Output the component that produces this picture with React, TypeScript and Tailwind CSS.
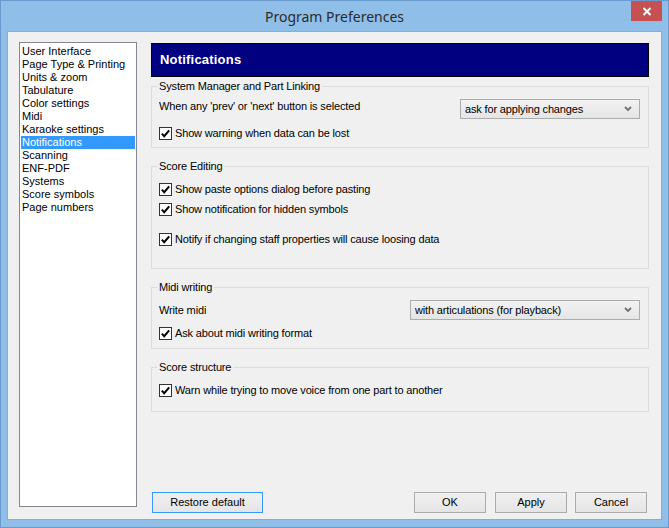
const categories = [
  "User Interface",
  "Page Type & Printing",
  "Units & zoom",
  "Tabulature",
  "Color settings",
  "Midi",
  "Karaoke settings",
  "Notifications",
  "Scanning",
  "ENF-PDF",
  "Systems",
  "Score symbols",
  "Page numbers",
];

function CheckRow({ label, className = "" }: { label: string; className?: string }) {
  return (
    <div className={`flex items-center h-[13px] ${className}`}>
      <span className="w-[13px] h-[13px] border border-[#333333] bg-white flex items-center justify-center shrink-0">
        <svg width="11" height="11" viewBox="0 0 11 11">
          <path d="M1.8 5.6 L4.2 8.2 L9.2 2.4" fill="none" stroke="#000" strokeWidth="2" />
        </svg>
      </span>
      <span className="ml-[3px] leading-[13px]">{label}</span>
    </div>
  );
}

function Combo({ value, className = "" }: { value: string; className?: string }) {
  return (
    <div
      className={`h-[20px] border border-[#acacac] bg-gradient-to-b from-[#f2f2f2] to-[#e5e5e5] flex items-center justify-between pl-[4px] pr-[7px] ${className}`}
    >
      <span className="leading-[13px]">{value}</span>
      <svg width="8" height="6" viewBox="0 0 8 6">
        <path d="M1 1 L4 4 L7 1" fill="none" stroke="#707070" strokeWidth="1.8" />
      </svg>
    </div>
  );
}

function Group({
  title,
  className = "",
  children,
}: {
  title: string;
  className?: string;
  children: React.ReactNode;
}) {
  return (
    <fieldset className={`border border-[#dcdcdc] pl-[7px] pr-[8px] ${className}`}>
      <legend className="-ml-[2px] px-[2px] leading-[13px]">{title}</legend>
      {children}
    </fieldset>
  );
}

function Button({ label, className = "" }: { label: string; className?: string }) {
  return (
    <button
      className={`h-[21px] border bg-gradient-to-b from-[#f0f0f0] to-[#e5e5e5] text-[11px] leading-[13px] text-black ${className}`}
    >
      {label}
    </button>
  );
}

export default function App() {
  return (
    <div className="w-[669px] h-[528px] bg-[#8fbfe9] border border-[#6b9bce] flex flex-col font-['Liberation_Sans',Arial,sans-serif] text-[11px] text-black">
      {/* title bar */}
      <div className="relative h-[30px] shrink-0 flex items-center justify-center">
        <span className="font-['Noto_Sans',sans-serif] text-[14px] text-[#2b2b2b]">
          Program Preferences
        </span>
        <button className="absolute top-0 right-[6px] w-[31px] h-[20px] bg-[#c75050] flex items-center justify-center">
          <svg width="10" height="9" viewBox="0 0 10 9">
            <path d="M1.5 1 L8.5 8 M8.5 1 L1.5 8" stroke="#fff" strokeWidth="2" />
          </svg>
        </button>
      </div>

      {/* client area */}
      <div className="mx-[6px] mb-[7px] flex-1 bg-[#f0f0f0] border border-[#82aedb] flex">
        {/* category list */}
        <div className="ml-[11px] mt-[10px] mb-[12px] w-[118px] border border-[#828790] bg-white p-[1px] pt-[1.5px]">
          {categories.map((c) => (
            <div
              key={c}
              className={`h-[13px] leading-[13px] pl-[1px] whitespace-nowrap ${
                c === "Notifications" ? "bg-[#3399ff] text-white" : ""
              }`}
            >
              {c}
            </div>
          ))}
        </div>

        {/* settings panel */}
        <div className="ml-[14px] mr-[12px] w-[498px] flex flex-col tracking-[-0.15px]">
          <div className="mt-[11px] h-[34px] bg-[#000080] border border-black flex items-center pl-[8px]">
            <span className="text-white font-bold text-[13px] tracking-[0.2px]">Notifications</span>
          </div>

          <Group title="System Manager and Part Linking" className="mt-[3px] pb-[7px]">
            <div className="mt-[6px] flex justify-between items-start">
              <span className="mt-[1px] leading-[13px]">When any 'prev' or 'next' button is selected</span>
              <Combo value="ask for applying changes" className="w-[180px]" />
            </div>
            <CheckRow label="Show warning when data can be lost" className="mt-[8px]" />
          </Group>

          <Group title="Score Editing" className="mt-[12px] pb-[22px]">
            <CheckRow label="Show paste options dialog before pasting" className="mt-[10px]" />
            <CheckRow label="Show notification for hidden symbols" className="mt-[7px]" />
            <CheckRow label="Notify if changing staff properties will cause loosing data" className="mt-[17px]" />
          </Group>

          <Group title="Midi writing" className="mt-[12px] pb-[8px]">
            <div className="mt-[6px] flex justify-between items-center">
              <span className="leading-[13px]">Write midi</span>
              <Combo value="with articulations (for playback)" className="w-[230px]" />
            </div>
            <CheckRow label="Ask about midi writing format" className="mt-[7px]" />
          </Group>

          <Group title="Score structure" className="mt-[12px] pb-[14px]">
            <CheckRow label="Warn while trying to move voice from one part to another" className="mt-[10px]" />
          </Group>

          <div className="flex-1" />

          <div className="mb-[6px] flex items-center pr-[2px] tracking-normal">
            <Button label="Restore default" className="ml-[1px] w-[111px] border-[#3399ff]" />
            <div className="flex-1" />
            <Button label="OK" className="w-[72px] border-[#acacac]" />
            <Button label="Apply" className="ml-[9px] w-[72px] border-[#acacac]" />
            <Button label="Cancel" className="ml-[8px] w-[72px] border-[#acacac]" />
          </div>
        </div>
      </div>
    </div>
  );
}
